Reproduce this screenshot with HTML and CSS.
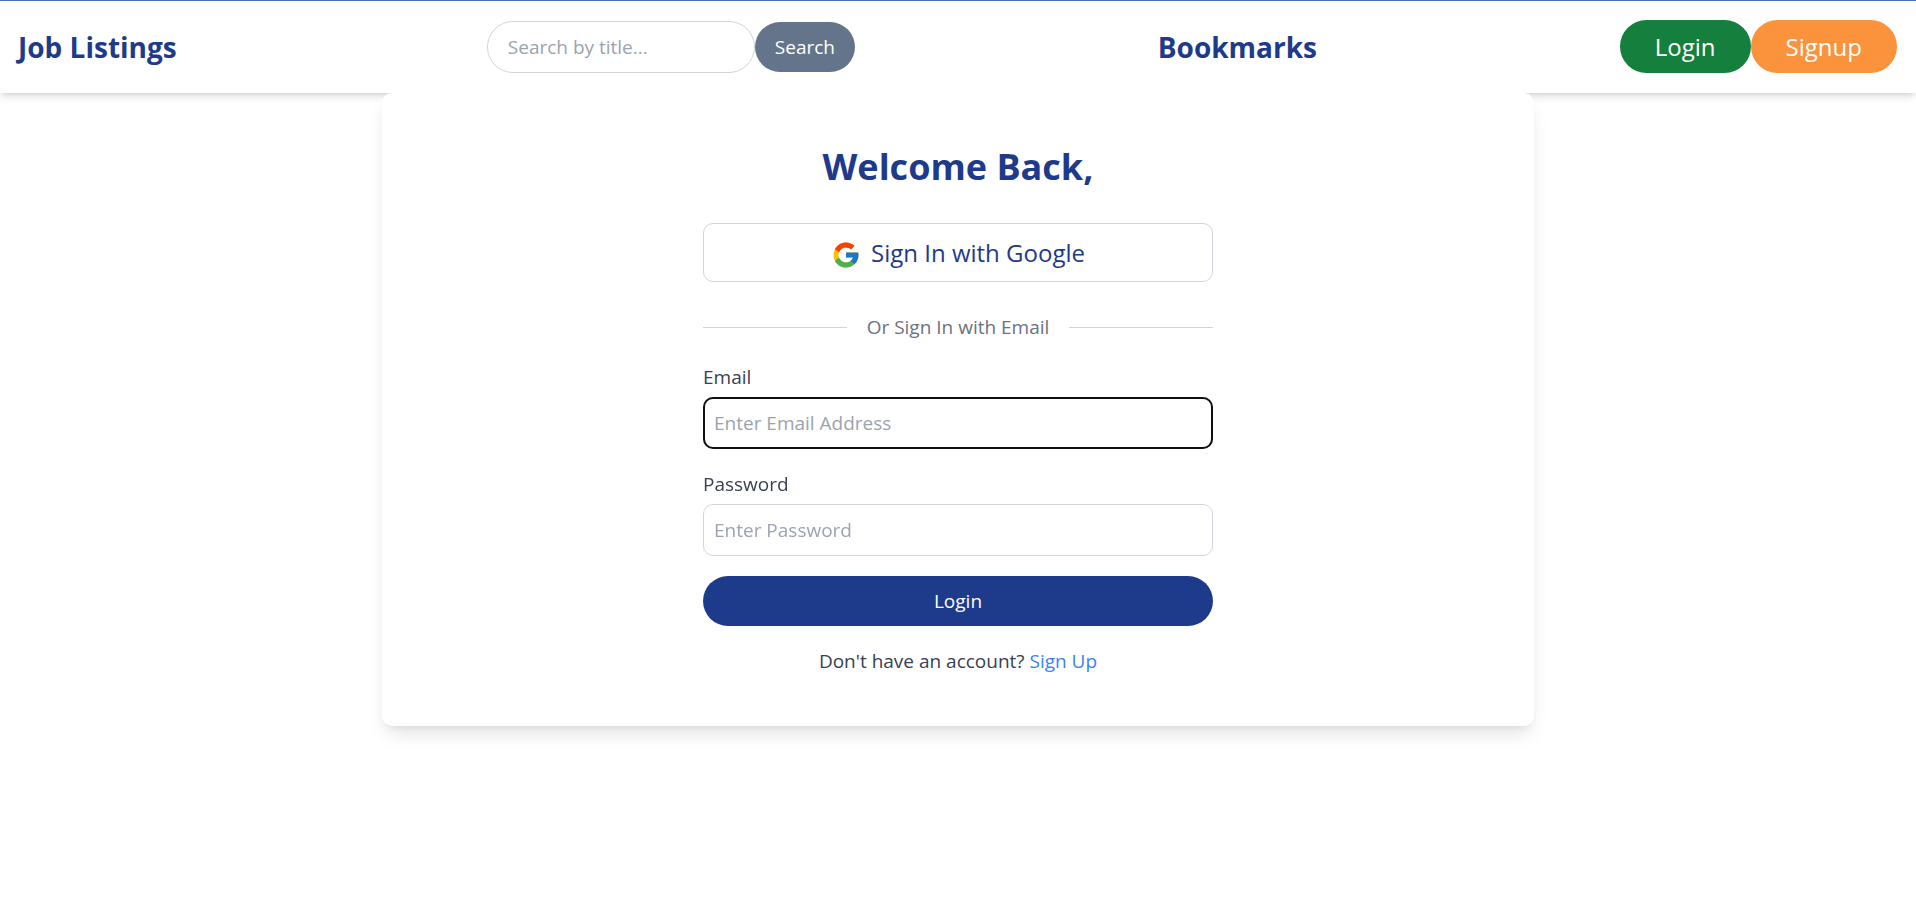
FILE: index.html
```html
<!DOCTYPE html>
<html lang="en">
<head>
<meta charset="utf-8">
<title>Job Listings - Login</title>
<link rel="stylesheet" href="styles.css">
</head>
<body>
<header class="navbar">
  <a class="nav-link nav-brand" href="#">Job Listings</a>
  <form class="search">
    <input class="search-input" type="text" placeholder="Search by title..." aria-label="Search by title">
    <button class="search-button" type="button">Search</button>
  </form>
  <a class="nav-link" href="#">Bookmarks</a>
  <div class="nav-actions">
    <button class="pill pill-login" type="button">Login</button>
    <button class="pill pill-signup" type="button">Signup</button>
  </div>
</header>
<main class="card">
  <form class="login-form">
    <h1 class="title">Welcome Back,</h1>
    <button class="google-button" type="button">
      <svg class="google-icon" viewBox="0 0 48 48" aria-hidden="true">
        <path fill="#FFC107" d="M43.6 20.1H42V20H24v8h11.3C33.7 32.7 29.2 36 24 36c-6.600 0-12-5.400-12-12s5.400-12 12-12c3.100 0 5.800 1.200 8 3l5.700-5.700C34 6.100 29.300 4 24 4 13 4 4 13 4 24s9 20 20 20 20-9 20-20c0-1.300-.1-2.600-.4-3.900z"/>
        <path fill="#FF3D00" d="M6.300 14.700l6.600 4.800C14.700 15.100 19 12 24 12c3.100 0 5.800 1.200 8 3l5.700-5.700C34 6.100 29.300 4 24 4 16.300 4 9.700 8.300 6.300 14.700z"/>
        <path fill="#4CAF50" d="M24 44c5.200 0 9.900-2 13.400-5.200l-6.200-5.200C29.200 35.100 26.700 36 24 36c-5.200 0-9.600-3.300-11.300-7.900l-6.500 5C9.500 39.600 16.200 44 24 44z"/>
        <path fill="#1976D2" d="M43.600 20.100H42V20H24v8h11.300c-.8 2.200-2.200 4.200-4.100 5.600l6.200 5.200C37 39.200 44 34 44 24c0-1.300-.1-2.600-.4-3.900z"/>
      </svg>
      <span>Sign In with Google</span>
    </button>
    <div class="divider"><span>Or Sign In with Email</span></div>
    <div class="field">
      <label for="email">Email</label>
      <input class="text-input" id="email" type="email" placeholder="Enter Email Address" autofocus>
    </div>
    <div class="field">
      <label for="password">Password</label>
      <input class="text-input" id="password" type="password" placeholder="Enter Password">
    </div>
    <button class="submit-button" type="submit">Login</button>
    <p class="signup-note">Don't have an account? <a class="signup-link" href="#">Sign Up</a></p>
  </form>
</main>
</body>
</html>
```
FILE: styles.css
```css
* {
  box-sizing: border-box;
}

body {
  min-height: 100vh;
  margin: 0;
  background: #fff;
  color: #374151;
  font-family: "Open Sans", "Noto Sans", sans-serif;
  font-size: 19px;
  line-height: 30px;
}

button,
input {
  margin: 0;
  font: inherit;
}

button {
  border: 0;
  cursor: pointer;
}

a {
  text-decoration: none;
}

.navbar {
  display: flex;
  align-items: center;
  justify-content: space-between;
  padding: 19px 19px 20px 18px;
  border-top: 1px solid #4a73ae;
  box-shadow: 0 5px 8px -1px rgba(0, 0, 0, 0.1), 0 3px 5px -2px rgba(0, 0, 0, 0.1);
}

.nav-link {
  color: #1e3a8a;
  font-size: 28px;
  font-weight: 700;
  line-height: 40px;
}

.nav-brand {
  min-width: 166px;
}

.search,
.nav-actions {
  display: flex;
  align-items: center;
}

.search-input {
  width: 268px;
  padding: 10px 20px;
  border: 1px solid #d1d5db;
  border-radius: 26px;
}

.search-button {
  padding: 10px 20px;
  border-radius: 25px;
  background: #64748b;
  color: #fff;
}

.pill {
  padding: 9px 35px;
  border-radius: 27px;
  color: #fff;
  font-size: 24px;
  line-height: 35px;
}

.pill-login {
  background: #15803d;
}

.pill-signup {
  background: #fb923c;
}

.card {
  width: 1152px;
  max-width: 100%;
  margin: 0 auto;
  padding: 50px;
  border-radius: 10px;
  background: #fff;
  box-shadow: 0 12px 19px -4px rgba(0, 0, 0, 0.1), 0 5px 8px -5px rgba(0, 0, 0, 0.1);
}

.login-form {
  display: flex;
  flex-direction: column;
  gap: 20px;
  max-width: 510px;
  margin: 0 auto;
}

.title {
  margin: 0 0 12px;
  color: #1e3a8a;
  font-size: 36px;
  font-weight: 700;
  line-height: 48px;
  text-align: center;
}

.google-button {
  display: flex;
  align-items: center;
  justify-content: center;
  gap: 10px;
  margin-bottom: 10px;
  padding: 11px 20px;
  border: 1px solid #d1d5db;
  border-radius: 10px;
  background: #fff;
  color: #1e3a8a;
  font-size: 24px;
  line-height: 35px;
}

.google-icon {
  width: 30px;
  height: 30px;
  margin-top: 5px;
}

.divider {
  display: flex;
  align-items: center;
  gap: 20px;
  color: #6b7280;
}

.divider::before,
.divider::after {
  content: "";
  flex: 1;
  border-top: 1px solid #d1d5db;
}

.field {
  display: flex;
  flex-direction: column;
  gap: 5px;
}

.text-input {
  width: 100%;
  padding: 10px;
  border: 1px solid #d1d5db;
  border-radius: 10px;
}

.text-input:focus {
  outline: 2px solid #101010;
  outline-offset: -2px;
}

.search-input::placeholder,
.text-input::placeholder {
  color: #9ca3af;
}

.submit-button {
  padding: 10px 20px;
  border-radius: 25px;
  background: #1e3a8a;
  color: #fff;
}

.signup-note {
  margin: 0;
  text-align: center;
}

.signup-link {
  color: #3b82f6;
}
```
